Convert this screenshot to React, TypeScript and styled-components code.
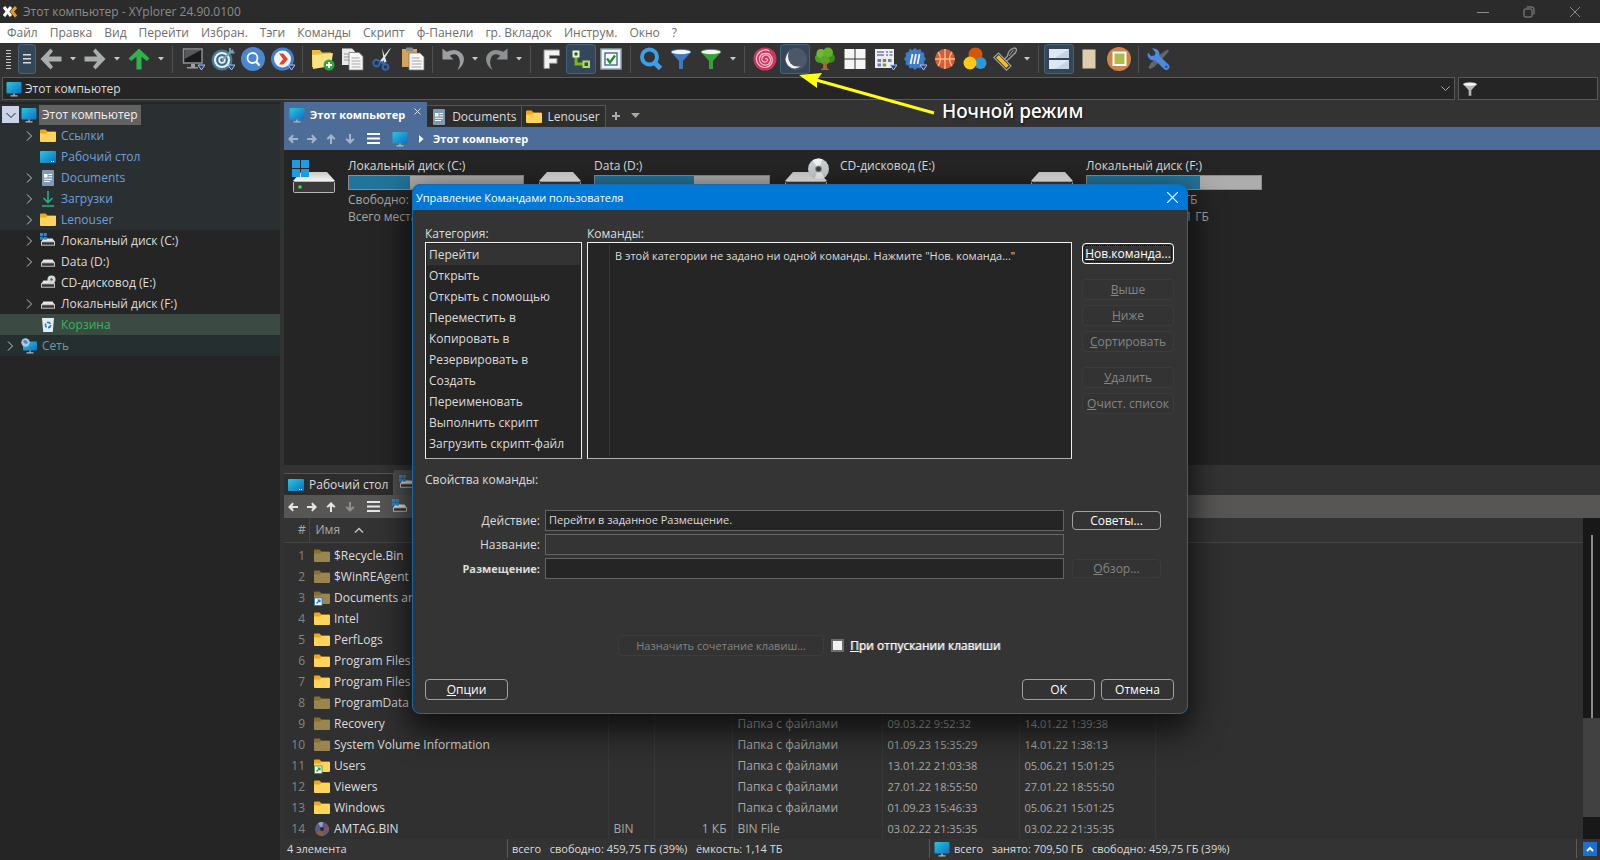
import React from "react";
import styled, { createGlobalStyle, css } from "styled-components";

const GlobalStyle = createGlobalStyle`
  * { box-sizing: border-box; }
  html, body, #root { height: 100%; margin: 0; }
  body {
    background: #333;
    color: #dcdcdc;
    font: 12px/16px "Open Sans", "Noto Sans", sans-serif;
    overflow: hidden;
  }
  button, input { font: inherit; color: inherit; }
  button { padding: 0; }
  ul { list-style: none; margin: 0; padding: 0; }
  svg { display: block; flex: none; }
`;

/* ---------- icons ---------- */

const MonitorIcon = ({ size = 16 }: { size?: number }) => (
  <svg width={size} height={size} viewBox="0 0 16 16">
    <defs>
      <linearGradient id="scr" x1="0" y1="0" x2="1" y2="1">
        <stop offset="0" stopColor="#27c6dc" />
        <stop offset="1" stopColor="#0f6fc4" />
      </linearGradient>
    </defs>
    <rect x="0.5" y="1" width="15" height="11.500" rx="1" fill="url(#scr)" />
    <path d="M7.300 12.500h1.400v2h-1.400zM4.500 14.200h7v1.200h-7z" fill="#a9bcc6" />
  </svg>
);

const DesktopIcon = () => (
  <svg width="16" height="16" viewBox="0 0 16 16">
    <rect x="0" y="2" width="16" height="12" rx="1" fill="url(#scr)" />
    <path d="M11 12h1v1h-1zM13 12h1v1h-1z" fill="#fff" />
  </svg>
);

const FolderIcon = ({ dim, badge }: { dim?: boolean; badge?: string }) => (
  <svg width="16" height="16" viewBox="0 0 16 16">
    <path d="M0 2.500q0-1 1-1h4.500l2 2H15q1 0 1 1V8H0z" fill={dim ? "#8a6f2a" : "#f0a818"} />
    <path d="M0 5.500h6l1.500-1.500H15q1 0 1 1V13q0 1-1 1H1q-1 0-1-1z" fill={dim ? "#9a8450" : "#ffd35c"} />
    {badge && (
      <g>
        <rect x="0.500" y="8" width="7.500" height="7.500" fill="#fff" stroke={badge} strokeWidth=".8" />
        <path d="M2.500 13.500l3-3M3.500 10h2.500v2.500" stroke={badge} strokeWidth="1.200" fill="none" />
      </g>
    )}
  </svg>
);

const DocIcon = () => (
  <svg width="16" height="16" viewBox="0 0 16 16">
    <rect x="2" y="0" width="12" height="16" rx="1" fill="#8299b5" />
    <path d="M4 4h3.500v3.500H4zM8.500 4H12v1H8.500zM8.500 6.200H12v1H8.500zM4 8.700h8v1H4zM4 11h6v1H4z" fill="#fff" />
  </svg>
);

const DownloadIcon = () => (
  <svg width="16" height="16" viewBox="0 0 16 16" fill="none" stroke="#1fb58a" strokeWidth="1.600">
    <path d="M8 0v11M3.500 7L8 11.500 12.500 7M2 15h12" />
  </svg>
);

const WinTiles = () => <path d="M0 0h3v3H0zM3.700 0h3v3h-3zM0 3.700h3v3H0zM3.700 3.700h3v3h-3z" fill="#1e8fe0" />;

const DriveIcon = ({ kind }: { kind?: "win" | "cd" }) => (
  <svg width="16" height="16" viewBox="0 0 16 16">
    <path d="M3.500 5.500h9L15 9H1z" fill="#e8e8e8" />
    <rect x="1.500" y="8.800" width="13" height="3.400" fill="#333" stroke="#c8c8c8" />
    {kind === "win" && <WinTiles />}
    {kind === "cd" && (
      <g>
        <circle cx="11.500" cy="4.500" r="4" fill="#d4d8da" />
        <circle cx="11.500" cy="4.500" r="1.200" fill="#555" />
      </g>
    )}
  </svg>
);

const BigDriveIcon = ({ kind }: { kind?: "win" | "cd" }) => (
  <svg width="46" height="38" viewBox="0 0 46 38">
    <defs>
      <linearGradient id="lid" x1="0" y1="0" x2="0" y2="1">
        <stop offset="0" stopColor="#c9c9c9" />
        <stop offset="1" stopColor="#f2f2f2" />
      </linearGradient>
    </defs>
    <path d="M10 14h26l8 9H2z" fill="url(#lid)" />
    <rect x="2.500" y="23.500" width="41" height="11" rx="1" fill="#3a3a3a" stroke="#b9b9b9" />
    <circle cx="9" cy="29" r="1.800" fill="#3be03b" />
    {kind === "win" && (
      <path d="M1 2h8v8H1zM10 2h8v8h-8zM1 11h8v8H1zM10 11h8v8h-8z" fill="#1d9be6" />
    )}
    {kind === "cd" && (
      <g>
        <circle cx="35.500" cy="11" r="10.500" fill="#ccd0d2" />
        <path d="M35.500 11L29.500 2.500A10.500 10.500 0 0 1 39.500 1.300zM35.500 11l6 8.500a10.500 10.500 0 0 1-10 1.300z" fill="#f1f3f4" />
        <circle cx="35.500" cy="11" r="3" fill="#3f4447" stroke="#8d9396" />
      </g>
    )}
  </svg>
);

const BinIcon = () => (
  <svg width="16" height="16" viewBox="0 0 16 16">
    <path d="M2 1h12l-1.200 14H3.200z" fill="#e6edf2" />
    <circle cx="8" cy="8" r="2.600" fill="none" stroke="#1f7fd0" strokeWidth="1.600" strokeDasharray="4 1.400" />
  </svg>
);

const NetworkIcon = () => (
  <svg width="16" height="16" viewBox="0 0 16 16">
    <rect x="2" y="3.500" width="14" height="9" rx="1" fill="url(#scr)" />
    <path d="M8.500 12.500h1.200v2H8.500zM5.500 14.200h7v1.200h-7z" fill="#a9bcc6" />
    <circle cx="4.500" cy="4.500" r="4.200" fill="#a7cbe6" />
    <path d="M2 3q2-2 4 0T5 6Q3 6 2 3z" fill="#5189b8" />
  </svg>
);

const DiscFileIcon = () => (
  <svg width="16" height="16" viewBox="0 0 16 16">
    <circle cx="8" cy="8" r="7" fill="#5c5a86" />
    <path d="M8 8L2 12a7 7 0 0 0 8 2.700zM8 8l6.500 2.500A7 7 0 0 0 15 6z" fill="#8a5a48" />
    <path d="M8 8L4 2.300A7 7 0 0 1 9 1z" fill="#98a0c8" />
    <circle cx="8" cy="8" r="2" fill="#2c2c2c" />
  </svg>
);

const Chevron = ({ open }: { open?: boolean }) => (
  <svg width="10" height="10" viewBox="0 0 10 10" fill="none" stroke={open ? "#222" : "#c4c4c4"}>
    <path d={open ? "M.5 3L5 7.500 9.500 3" : "M2 .5L6.500 5 2 9.500"} />
  </svg>
);

const Caret = () => (
  <svg width="6" height="4" viewBox="0 0 6 4">
    <path d="M0 0h6L3 3.500z" fill="#c8c8c8" />
  </svg>
);

const SmallArrow = ({ turn, color }: { turn: number; color: string }) => (
  <svg width="10" height="10" viewBox="0 0 10 10">
    <path transform={`rotate(${turn} 5 5)`} d="M0 5L4.500.5l1.300 1.300L4.300 4H10v2H4.300l1.500 2.200-1.300 1.300z" fill={color} />
  </svg>
);

const BurgerIcon = ({ color }: { color: string }) => (
  <svg width="13" height="11" viewBox="0 0 13 11">
    <path d="M0 0h13v2H0zM0 4.500h13v2H0zM0 9h13v2H0z" fill={color} />
  </svg>
);

const FunnelIcon = ({ color, size = 24 }: { color: string; size?: number }) => (
  <svg width={size} height={size} viewBox="0 0 24 24">
    <path d="M2 5l8 9v8h4v-8l8-9z" fill={color} />
    <ellipse cx="12" cy="5" rx="10" ry="2.600" fill="#f2f6f8" stroke={color} strokeWidth=".8" />
  </svg>
);

const Mark = () => <path d="M17 18h7l-3.500 5z" fill="#27407c" stroke="#a9c4f0" strokeWidth="1" />;

const tool = (body: React.ReactNode) => (
  <svg width="24" height="24" viewBox="0 0 24 24">{body}</svg>
);

const bigArrow = "M1.500 12L11.500 1.500l2.500 2.700L9.800 9.500H22.500v5H9.800l4.200 5.300-2.500 2.700z";

const tools: Record<string, React.ReactNode> = {
  back: tool(<path d={bigArrow} fill="#a9aeab" />),
  forward: tool(<path d={bigArrow} transform="rotate(180 12 12)" fill="#a9aeab" />),
  up: tool(<path d={bigArrow} transform="rotate(90 12 12)" fill="#31b14c" />),
  screen: tool(
    <>
      <rect x="2.500" y="2" width="18.500" height="14" fill="#1a1a1a" stroke="#8d9092" strokeWidth="1.500" />
      <path d="M3.500 3h16.500L3.500 12z" fill="#55595c" />
      <path d="M10 17h4v3h-4zM6 20h11v1.500H6z" fill="#9b9ea0" />
      <Mark />
    </>,
  ),
  target: tool(
    <>
      <circle cx="11" cy="13" r="10.500" fill="#457a96" />
      <circle cx="11" cy="13" r="7" fill="#3b6f8b" stroke="#e9eef0" strokeWidth="2.200" />
      <circle cx="11" cy="13" r="2.800" fill="none" stroke="#e9eef0" strokeWidth="1.800" />
      <path d="M11 13L22 3M19 1v4.500h4.500" stroke="#7aa0b2" strokeWidth="1.800" fill="none" />
      <Mark />
    </>,
  ),
  find: tool(
    <>
      <circle cx="12" cy="12" r="12" fill="#4a86d2" />
      <circle cx="11.500" cy="11" r="5" fill="none" stroke="#fff" strokeWidth="1.800" />
      <path d="M15 14.500l3.500 4" stroke="#fff" strokeWidth="2.400" />
    </>,
  ),
  next: tool(
    <>
      <circle cx="11.500" cy="12" r="10" fill="#f6f6f6" stroke="#3f7fcf" strokeWidth="3" />
      <path d="M8 6.500h4.200L17 12l-4.800 5.500H8L12 12z" fill="#e2432a" />
      <Mark />
    </>,
  ),
  newFolder: tool(
    <>
      <path d="M1 3h8l2 2.500h9V20H1z" fill="#e6bd3d" />
      <path d="M1 8l12-1 9-1-2 13L2 22z" fill="#fbe285" />
      <circle cx="18" cy="18" r="5.500" fill="#2fa83c" />
      <path d="M18 15v6M15 18h6" stroke="#fff" strokeWidth="1.800" />
    </>,
  ),
  copy: tool(
    <>
      <path d="M1 1.500h10l3 3V18H1z" fill="#e9e9e9" />
      <path d="M3 7h5M3 10h5M3 13h5" stroke="#999" />
      <path d="M8 5.500h10l4 4V23H8z" fill="#f7f7f7" stroke="#777" strokeWidth=".8" />
      <path d="M10.500 11h8M10.500 14h9M10.500 17h9M10.500 20h9" stroke="#a5a5a5" />
    </>,
  ),
  cut: tool(
    <>
      <path d="M20 1L10.500 16.500l-1.500-2.500L18.500 2zM11 1l4.500 13.500-2.500 1.500z" fill="#e3e7ea" />
      <path d="M10 14l5 2-1 2-5-2z" fill="#2d66b8" />
      <circle cx="5.500" cy="16" r="3.200" fill="none" stroke="#2d66b8" strokeWidth="2" />
      <circle cx="14.500" cy="20" r="2.800" fill="none" stroke="#2d66b8" strokeWidth="2" />
    </>,
  ),
  paste: tool(
    <>
      <rect x="1" y="2" width="15" height="18" fill="#d4a559" />
      <rect x="5" y="0.500" width="7" height="4" rx="1" fill="#8a8a8a" />
      <path d="M8 6h11l4 4v13H8z" fill="#f7f7f7" stroke="#777" strokeWidth=".8" />
      <path d="M10.500 11h8M10.500 14h10M10.500 17h10M10.500 20h10" stroke="#a5a5a5" />
    </>,
  ),
  undo: tool(<path d="M1.500 1.500v11h11L8.800 8.800Q15.500 5 18 11t-1.500 12Q24.500 17 22.500 9.500 18-.5 5.500 4.800z" fill="#9c9fa1" />),
  redo: tool(<path d="M22.500 1.500v11H11.500l3.700-3.700Q8.500 5 6 11t1.500 12Q-.5 17 1.500 9.500 6-.5 18.500 4.800z" fill="#8e9193" />),
  flag: tool(
    <path d="M5 3h15.500v5.500H10.500v3h7.500v4.800h-7.500V21.500H5z" fill="#f2f2f2" stroke="#8e8e8e" strokeWidth="1" />,
  ),
  branch: tool(
    <g fill="none" strokeWidth="2">
      <path d="M7 9v8h8" stroke="#7ab51d" strokeWidth="3" />
      <rect x="4.500" y="4.500" width="5" height="5" fill="#34495c" stroke="#e6f7bd" />
      <rect x="14.500" y="14.500" width="5.500" height="5.500" fill="#34495c" stroke="#b5dd58" />
    </g>,
  ),
  check: tool(
    <>
      <rect x="2" y="2" width="20" height="20" fill="#f2f5f8" stroke="#8fa4b8" strokeWidth="1.500" />
      <rect x="6" y="6" width="12" height="12" fill="#fff" stroke="#4b6a86" strokeWidth="1.400" />
      <path d="M8 11.500l3 4 5-7" fill="none" stroke="#18962d" strokeWidth="2.400" />
    </>,
  ),
  lens: tool(
    <>
      <circle cx="10.500" cy="10" r="7.500" fill="#333" stroke="#3aa0ea" strokeWidth="4" />
      <path d="M15.500 15.500l6 6" stroke="#3aa0ea" strokeWidth="5" />
    </>,
  ),
  funnelBlue: <FunnelIcon color="#3d78c2" />,
  funnelGreen: <FunnelIcon color="#35a235" />,
  spiral: tool(
    <>
      <circle cx="12" cy="12" r="11.500" fill="#d0355e" />
      <path
        d="M12 12a1.500 1.500 0 0 1 2.500 1.500A3 3 0 0 1 9 13a4 4 0 0 1 7-3.500 5 5 0 0 1-3 8.500 6 6 0 0 1-6.500-7A6.500 6.500 0 0 1 19 11a7.500 7.500 0 0 1-7 9.500A8.500 8.500 0 0 1 3.500 11a9 9 0 0 1 13-7"
        fill="none"
        stroke="#f5c6d3"
        strokeWidth="1.200"
      />
    </>,
  ),
  moon: tool(
    <>
      <circle cx="13" cy="12" r="11" fill="#4c5868" />
      <path d="M6 4.500Q-.5 12 5 18.500q6 5.500 13 .5-6.500 2-10.500-2.500Q3.500 11 6 4.500z" fill="#f4f6f8" />
    </>,
  ),
  tree: tool(
    <>
      <path d="M10.500 12h3l.5 9 2.500 2h-9l2.500-2z" fill="#a9682c" />
      <circle cx="7" cy="11" r="5" fill="#4f9e22" />
      <circle cx="17" cy="11" r="5" fill="#3f8c1b" />
      <circle cx="8" cy="6.500" r="4.500" fill="#6dbb32" />
      <circle cx="15" cy="5.500" r="5" fill="#62b02c" />
      <circle cx="12" cy="13" r="4.500" fill="#57a626" />
      <path d="M10.500 15l1.500 3 1.500-3" stroke="#a9682c" strokeWidth="1.500" fill="none" />
    </>,
  ),
  tiles: tool(<path d="M1.500 2h10v9.500h-10zM12.500 2h10v9.500h-10zM1.500 12.500h10V22h-10zM12.500 12.500h10V22h-10z" fill="#f5f5f5" />),
  calendar: tool(
    <>
      <rect x="2" y="2" width="19" height="19" fill="#eceef2" />
      <path d="M4 5h7M13 5h2M16.500 5h3M4 8h7M13 8h2M16.500 8h3" stroke="#777f95" strokeWidth="1.600" />
      <path d="M4.500 12h3.500v3H4.500zM15 12h3.500v3H15zM4.500 16.500h3.500v3H4.500z" fill="#6e7fae" />
      <path d="M9.700 12h3.500v3H9.700z" fill="#a9722f" />
      <path d="M9.700 16.500h3.500v3H9.700z" fill="#6fa332" />
      <Mark />
    </>,
  ),
  badge: tool(
    <>
      <path
        d="M12 1l2.500 2L17.500 2l1 3 3 1-.5 3 2 3-2 2.500.5 3-3 1-1 3-3-.8L12 23l-2.500-2.300-3 .8-1-3-3-1 .5-3L1 12l2-3-.5-3 3-1 1-3 3 1z"
        fill="#3d7ac8"
      />
      <path d="M9.500 7l-2 10M13 7l-2 10M16.500 7l-2 10" stroke="#f0f4fa" strokeWidth="1.800" />
      <Mark />
    </>,
  ),
  ball: tool(
    <>
      <circle cx="12" cy="12" r="10" fill="#d75a40" />
      <path
        d="M12 2v20M2 12h20M5 5q5 7 0 14M19 5q-5 7 0 14"
        stroke="#f2c078"
        strokeWidth="1.400"
        fill="none"
      />
    </>,
  ),
  colors: tool(
    <>
      <circle cx="12.500" cy="7.500" r="7" fill="#d4560c" />
      <circle cx="17.500" cy="16" r="6" fill="#2f96d8" />
      <circle cx="7" cy="16" r="6.500" fill="#ffc814" />
    </>,
  ),
  brush: tool(
    <>
      <path d="M.8 10.500L5.500 6l12.500 13-4.500 4.200z" fill="#2b2b2b" stroke="#a2a2a2" strokeWidth="1.200" />
      <path d="M3 10.700L5.800 8l10 10.500-2.600 2.600z" fill="#f4bf1c" />
      <path d="M11 12.500l3.500-3.500Q15 3 21 1q4 0 1.500 4.500L17 11l-4 3.500" fill="none" stroke="#a2a2a2" strokeWidth="1.300" />
      <path d="M20.500 3l-4.500 6" stroke="#a2a2a2" />
    </>,
  ),
  split: tool(
    <>
      <path d="M2 2h20v9H2zM2 13h20v9H2z" fill="#dfe8f2" />
      <path d="M22 2v9H8zM22 13v9H8z" fill="#c5d3e4" />
    </>,
  ),
  sheet: tool(<rect x="5.500" y="2.500" width="13" height="19" fill="#dccdae" />),
  frame: tool(
    <>
      <circle cx="12" cy="12" r="12" fill="#cd8447" />
      <rect x="6.500" y="5.500" width="12" height="12.500" fill="#b0bb4c" stroke="#fff" strokeWidth="2" />
    </>,
  ),
  wrench: tool(
    <>
      <path d="M20.500 2.500l1.500 1.500L17 10 7 20l-4 2-1.500-1.500 2-4L13 7.500z" fill="#62676e" />
      <path
        d="M5 1.500l3.500 4-1 3-3.500.5L1 5.500Q-.5 10 3 12.500q3 1.500 5 .8l9 8.700q2.500 2 4.500 0t0-4.500L12.500 9Q13 5 10.500 2.800 8 1 5 1.500z"
        fill="#4a8ae0"
      />
      <circle cx="19.300" cy="19.800" r="1.200" fill="#234a86" />
    </>,
  ),
};

/* ---------- window frame ---------- */

const Shell = styled.div`
  display: flex;
  flex-direction: column;
  height: 100vh;
  position: relative;
`;

const TitleBar = styled.header`
  display: flex;
  align-items: center;
  height: 23px;
  padding: 0 2px 0 3px;
  gap: 6px;
  background: #2b2b2b;
  color: #8c8c8c;
`;

const TitleText = styled.span`
  flex: 1;
  white-space: pre;
`;

const WindowControls = styled.div`
  display: flex;
`;

const WindowButton = styled.button`
  width: 46px;
  height: 20px;
  display: grid;
  place-items: center;
  border: 0;
  background: none;
`;

const MenuBar = styled.nav`
  display: flex;
  align-items: center;
  height: 20px;
  padding-left: 7px;
  gap: 12px;
  background: #fff;
`;

const MenuItem = styled.button`
  border: 0;
  background: none;
  color: #6d6d6d;
`;

const Toolbar = styled.div`
  position: relative;
  display: flex;
  align-items: center;
  height: 34px;
  padding: 0 0 2px 6px;
`;

const Grip = styled.span`
  width: 5px;
  height: 19px;
  margin-right: 7px;
  background: repeating-linear-gradient(#c8c8c8 0 1px, transparent 1px 3px);
`;

const ToolButton = styled.button<{ $on?: boolean; $w?: number }>`
  width: ${(p) => p.$w ?? 30}px;
  height: 30px;
  display: grid;
  place-items: center;
  border: 1px solid ${(p) => (p.$on ? "#47617a" : "transparent")};
  border-radius: 3px;
  background: ${(p) => (p.$on ? "#34465a" : "none")};
`;

const ToolSeparator = styled.span`
  width: 1px;
  height: 27px;
  margin: 0 5px 0 4px;
  background: #505050;
`;

const Callout = styled.div`
  position: absolute;
  left: 799px;
  top: 30px;
  z-index: 2;
  display: flex;
  color: #fff;
  font: 500 19px/26px "Noto Sans", sans-serif;
  pointer-events: none;
`;

const CalloutText = styled.span`
  padding: 25px 0 0 7px;
  text-shadow: 1px 1px 2px #111;
`;

const AddressRow = styled.div`
  display: flex;
  gap: 3px;
  height: 23px;
  padding: 0 2px;
`;

const FieldBox = styled.label<{ $w?: number }>`
  display: flex;
  align-items: center;
  gap: 3px;
  min-width: 0;
  padding: 0 4px 0 3px;
  ${(p) => (p.$w ? css`width: ${p.$w}px;` : css`flex: 1;`)}
  background: #252525;
  border: 1px solid #5a5a5a;
`;

const BareInput = styled.input`
  flex: 1;
  min-width: 0;
  padding: 0;
  border: 0;
  outline: 0;
  background: none;
`;

const Workspace = styled.main`
  flex: 1;
  display: flex;
  min-height: 0;
  padding-top: 2px;
`;

/* ---------- folder tree ---------- */

const TreePane = styled.aside`
  width: 280px;
  margin-right: 4px;
  background: #252525;
  padding-top: 2px;
`;

const toneFill = { base: "#252525", blue: "#2a2f32", green: "#3b4a43", teal: "#262f30" };
const toneText = { base: "#dcdcdc", blue: "#6f9fdc", green: "#35b85c", teal: "#709c96" };
type Tone = keyof typeof toneFill;

const TreeRow = styled.li<{ $depth: number; $tone: Tone }>`
  display: flex;
  align-items: center;
  height: 21px;
  padding-left: ${(p) => 2 + p.$depth * 19}px;
  background: ${(p) => toneFill[p.$tone]};
  color: ${(p) => toneText[p.$tone]};
`;

const Expander = styled.button<{ $open?: boolean }>`
  width: 17px;
  height: 17px;
  margin-right: 2px;
  display: grid;
  place-items: center;
  border: 0;
  background: ${(p) => (p.$open ? "#c9d3ea" : "none")};
`;

const TreeLabel = styled.span<{ $selected?: boolean }>`
  margin-left: 2px;
  padding: 2px 3px;
  ${(p) => p.$selected && css`background: #626262; color: #f0f0f0;`}
`;

const tree: { text: string; depth: number; tone: Tone; icon: React.ReactNode; expand?: boolean; open?: boolean }[] = [
  { text: "Этот компьютер", depth: 0, tone: "blue", icon: <MonitorIcon />, expand: true, open: true },
  { text: "Ссылки", depth: 1, tone: "blue", icon: <FolderIcon />, expand: true },
  { text: "Рабочий стол", depth: 1, tone: "blue", icon: <DesktopIcon /> },
  { text: "Documents", depth: 1, tone: "blue", icon: <DocIcon />, expand: true },
  { text: "Загрузки", depth: 1, tone: "blue", icon: <DownloadIcon />, expand: true },
  { text: "Lenouser", depth: 1, tone: "blue", icon: <FolderIcon />, expand: true },
  { text: "Локальный диск (C:)", depth: 1, tone: "base", icon: <DriveIcon kind="win" />, expand: true },
  { text: "Data (D:)", depth: 1, tone: "base", icon: <DriveIcon />, expand: true },
  { text: "CD-дисковод (E:)", depth: 1, tone: "base", icon: <DriveIcon kind="cd" /> },
  { text: "Локальный диск (F:)", depth: 1, tone: "base", icon: <DriveIcon />, expand: true },
  { text: "Корзина", depth: 1, tone: "green", icon: <BinIcon /> },
  { text: "Сеть", depth: 0, tone: "teal", icon: <NetworkIcon />, expand: true },
];

/* ---------- file panes ---------- */

const Panes = styled.section`
  flex: 1;
  min-width: 0;
  display: flex;
  flex-direction: column;
`;

const TabStrip = styled.div`
  display: flex;
  align-items: flex-end;
  height: 25px;
`;

const Tab = styled.button<{ $active?: string }>`
  position: relative;
  display: flex;
  align-items: center;
  gap: 5px;
  height: ${(p) => (p.$active ? 25 : 22)}px;
  padding: 0 5px 0 4px;
  border: 1px solid #555;
  border-width: 1px 1px 0 0;
  background: #2d2d2d;
  white-space: nowrap;
  ${(p) =>
    p.$active &&
    css`
      padding: 0 21px 0 5px;
      border-color: ${p.$active};
      background: ${p.$active};
      color: #fff;
      font-size: 11px;
      font-weight: 700;
    `}
`;

const TabClose = styled.span`
  position: absolute;
  right: 5px;
  top: 5px;
`;

const TabTool = styled.button`
  width: 20px;
  height: 22px;
  display: grid;
  place-items: center;
  border: 0;
  background: none;
`;

const PathBar = styled.div<{ $fill: string }>`
  display: flex;
  align-items: center;
  height: 23px;
  padding-left: 4px;
  gap: 9px;
  background: ${(p) => p.$fill};
  color: #fff;
  font-size: 11px;
  font-weight: 700;
`;

const ArrowButton = styled.button`
  width: 10px;
  height: 20px;
  display: grid;
  place-items: center;
  border: 0;
  background: none;
`;

const PathMenu = styled(ArrowButton)`
  width: 19px;
`;

const DriveArea = styled.div`
  flex: 1;
  min-height: 0;
  display: flex;
  align-items: flex-start;
  padding: 8px 0 0 7px;
  background: #252525;
`;

const DriveCard = styled.div`
  display: flex;
  width: 246px;
  gap: 11px;
  color: #a8a8a8;
  white-space: nowrap;
`;

const DriveName = styled.div`
  margin-bottom: 1px;
  color: #dcdcdc;
`;

const Gauge = styled.div`
  width: 176px;
  height: 15px;
  margin-bottom: 1px;
  border: 1px solid #8c8c8c;
  background: #adadad;
`;

const GaugeFill = styled.div`
  height: 100%;
  background: #23749a;
`;

const DriveNote = styled.div`
  line-height: 17px;
`;

const drives: { name: string; used?: number; free?: string; total?: string; kind?: "win" | "cd" }[] = [
  { name: "Локальный диск (C:)", used: 35, free: "Свободно: 96", total: "Всего места:", kind: "win" },
  { name: "Data (D:)", used: 57 },
  { name: "CD-дисковод (E:)", kind: "cd" },
  { name: "Локальный диск (F:)", used: 65, free: "Свободно: 163,3 ГБ", total: "Всего места: 461,1 ГБ" },
];

const LowerPane = styled.div`
  display: flex;
  flex-direction: column;
  padding-top: 5px;
`;

const ListArea = styled.div`
  display: flex;
`;

const FileTable = styled.table`
  flex: 1;
  width: 100%;
  table-layout: fixed;
  border-collapse: collapse;
  background: #303030;
  color: #a8a8a8;

  th {
    height: 24px;
    padding: 0 0 0 6px;
    border-bottom: 1px solid #454545;
    background: #333;
    font-weight: 400;
    text-align: left;
  }
  th:first-child { padding-left: 14px; border-right: 1px solid #454545; }
  td {
    height: 21px;
    padding: 0 0 0 5px;
    border-right: 1px solid #393939;
    white-space: nowrap;
  }
  td:first-child, td:last-child { border-right: 0; }
`;

const SpacerRow = styled.tr`
  && td { height: 3px; }
`;

const NumCell = styled.td`
  && { padding: 0 4px 0 0; }
  text-align: right;
  color: #858585;
`;

const SizeCell = styled.td`
  && { padding: 0 5px 0 0; }
  text-align: right;
`;

const DateCell = styled.td`
  font-size: 11px;
`;

const NameBox = styled.span`
  display: flex;
  align-items: center;
  gap: 4px;
  color: #dcdcdc;
`;

const SortHead = styled.span`
  display: flex;
  align-items: center;
  gap: 14px;
`;

const ScrollTrack = styled.div`
  width: 17px;
  display: flex;
  flex-direction: column;
  background: #181818;
`;

const ScrollLine = styled.div`
  width: 2px;
  height: 183px;
  margin: 17px 0 0 8px;
  background: #8a8a8a;
`;

const ScrollThumb = styled.div`
  height: 99px;
  background: #414141;
`;

type FileRow = { name: string; icon: React.ReactNode; ext?: string; size?: string; type?: string; changed?: string; made?: string };
const dir = "Папка с файлами";
const files: FileRow[] = [
  { name: "$Recycle.Bin", icon: <FolderIcon dim /> },
  { name: "$WinREAgent", icon: <FolderIcon dim /> },
  { name: "Documents and", icon: <FolderIcon dim badge="#1673d0" /> },
  { name: "Intel", icon: <FolderIcon /> },
  { name: "PerfLogs", icon: <FolderIcon /> },
  { name: "Program Files", icon: <FolderIcon /> },
  { name: "Program Files (", icon: <FolderIcon /> },
  { name: "ProgramData", icon: <FolderIcon dim /> },
  { name: "Recovery", icon: <FolderIcon dim />, type: dir, changed: "09.03.22 9:52:32", made: "14.01.22 1:39:38" },
  { name: "System Volume Information", icon: <FolderIcon dim />, type: dir, changed: "01.09.23 15:35:29", made: "14.01.22 1:38:13" },
  { name: "Users", icon: <FolderIcon badge="#1f9a3a" />, type: dir, changed: "13.01.22 21:03:38", made: "05.06.21 15:01:25" },
  { name: "Viewers", icon: <FolderIcon />, type: dir, changed: "27.01.22 18:55:50", made: "27.01.22 18:55:50" },
  { name: "Windows", icon: <FolderIcon />, type: dir, changed: "01.09.23 15:46:33", made: "05.06.21 15:01:25" },
  { name: "AMTAG.BIN", icon: <DiscFileIcon />, ext: "BIN", size: "1 КБ", type: "BIN File", changed: "03.02.22 21:35:35", made: "03.02.22 21:35:35" },
];

const StatusBar = styled.footer`
  display: flex;
  align-items: center;
  height: 21px;
  padding: 0 3px 2px;
  gap: 4px;
  font-size: 11px;
  white-space: pre;
`;

const StatusCell = styled.span<{ $w?: number }>`
  display: flex;
  align-items: center;
  gap: 4px;
  height: 19px;
  border-right: 1px solid #5a5a5a;
  ${(p) => (p.$w ? css`width: ${p.$w}px;` : css`flex: 1;`)}
`;

const StatusButton = styled.button`
  width: 14px;
  height: 14px;
  margin-left: 2px;
  display: grid;
  place-items: center;
  border: 0;
  background: #1a6fd0;
`;

/* ---------- dialog ---------- */

const Overlay = styled.div`
  position: absolute;
  inset: 184px 0 auto;
  z-index: 3;
  display: flex;
  justify-content: center;
`;

const Dialog = styled.section`
  width: 776px;
  border: 1px solid #1a6aab;
  border-radius: 8px;
  background: #343434;
  box-shadow: 0 12px 32px 4px rgba(0, 0, 0, 0.7);
  overflow: hidden;
`;

const DialogTitle = styled.header`
  display: flex;
  align-items: center;
  justify-content: space-between;
  height: 25px;
  padding: 0 9px 0 3px;
  background: #0078d7;
  color: #fff;
  font-size: 11px;
`;

const CloseButton = styled.button`
  border: 0;
  background: none;
`;

const DialogBody = styled.form`
  display: flex;
  flex-direction: column;
  padding: 16px 13px 13px 12px;
`;

const Choices = styled.div`
  display: grid;
  grid-template-columns: 157px 1fr 92px;
  column-gap: 5px;
`;

const Column = styled.div`
  display: flex;
  flex-direction: column;
`;

const ListBox = styled.ul`
  height: 217px;
  padding: 1px;
  border: 1px solid #f0f0f0;
  border-bottom-color: #b0b0b0;
  background: #252525;
`;

const Option = styled.li<{ $selected?: boolean }>`
  height: 21px;
  padding-left: 2px;
  line-height: 21px;
  background: ${(p) => (p.$selected ? "#333" : "none")};
`;

const CommandBox = styled(ListBox)`
  margin-right: 5px;
  padding: 2px 2px 2px 0;
`;

const CommandNote = styled.li`
  height: 100%;
  margin-left: 21px;
  padding: 3px 0 0 5px;
  border-left: 1px solid #383838;
  font-size: 11px;
`;

const ButtonStack = styled.div`
  display: flex;
  flex-direction: column;
  gap: 15px;
  padding-top: 17px;
`;

const ButtonGroup = styled.div`
  display: flex;
  flex-direction: column;
  gap: 5px;
`;

const PushButton = styled.button<{ $w?: number; $short?: boolean; $focus?: boolean; $small?: boolean }>`
  width: ${(p) => (p.$w ? `${p.$w}px` : "100%")};
  height: ${(p) => (p.$short ? 19 : 21)}px;
  border: 1px solid ${(p) => (p.$focus ? "#fff" : "#a0a0a0")};
  border-radius: 4px;
  background: #333;
  color: #fff;
  font-size: ${(p) => (p.$small ? 11 : 12)}px;
  line-height: 17px;
  white-space: nowrap;
  ${(p) => p.$focus && css`outline: 1px dotted #000; outline-offset: -3px;`}
  &:disabled {
    border-color: #3c3c3c;
    color: #858585;
  }
`;

const SectionLabel = styled.div`
  margin: 13px 0 22px;
`;

const FieldGrid = styled.div`
  display: grid;
  grid-template-columns: 115px 1fr 89px;
  column-gap: 5px;
  row-gap: 3px;
  align-items: center;
  padding-right: 13px;
`;

const FieldLabel = styled.label<{ $strong?: boolean }>`
  text-align: right;
  ${(p) => p.$strong && css`font-size: 11px; font-weight: 700;`}
`;

const TextField = styled.input`
  height: 21px;
  margin-right: 3px;
  padding: 0 3px 2px;
  border: 1px solid #646464;
  background: #252525;
  font-size: 11px;
  &:disabled { background: #343434; }
`;

const KeyRow = styled.div`
  display: flex;
  align-items: center;
  margin-top: 56px;
  padding-left: 193px;
`;

const CheckLabel = styled.label`
  display: flex;
  align-items: center;
  gap: 6px;
  margin-left: 7px;
  color: #fff;
  font-size: 12px;
  text-shadow: 1px 0 0 rgba(255, 255, 255, 0.5);
`;

const CheckBox = styled.input`
  appearance: none;
  width: 13px;
  height: 13px;
  margin: 0;
  border: 2px solid #6e6e6e;
  background: #f2f2f2;
`;

const DialogFooter = styled.div`
  display: flex;
  gap: 6px;
  margin-top: 23px;
`;

const FooterGap = styled.span`
  flex: 1;
`;

const Key = ({ text }: { text: string }) => (
  <>
    <u>{text[0]}</u>
    {text.slice(1)}
  </>
);

const categories = [
  "Перейти",
  "Открыть",
  "Открыть с помощью",
  "Переместить в",
  "Копировать в",
  "Резервировать в",
  "Создать",
  "Переименовать",
  "Выполнить скрипт",
  "Загрузить скрипт-файл",
];

const CommandDialog = () => (
  <Overlay>
    <Dialog role="dialog" aria-labelledby="dlg-title">
      <DialogTitle>
        <span id="dlg-title">Управление Командами пользователя</span>
        <CloseButton aria-label="Закрыть">
          <svg width="11" height="11" viewBox="0 0 11 11" stroke="#fff" strokeWidth="1.200">
            <path d="M0 0l11 11M11 0L0 11" />
          </svg>
        </CloseButton>
      </DialogTitle>
      <DialogBody onSubmit={(e) => e.preventDefault()}>
        <Choices>
          <Column>
            <span id="cat">Категория:</span>
            <ListBox role="listbox" aria-labelledby="cat">
              {categories.map((c, i) => (
                <Option key={c} role="option" aria-selected={i === 0} $selected={i === 0}>
                  {c}
                </Option>
              ))}
            </ListBox>
          </Column>
          <Column>
            <span id="cmd">Команды:</span>
            <CommandBox aria-labelledby="cmd">
              <CommandNote>В этой категории не задано ни одной команды. Нажмите "Нов. команда..."</CommandNote>
            </CommandBox>
          </Column>
          <ButtonStack>
            <PushButton type="button" $focus><Key text="Нов.команда..." /></PushButton>
            <ButtonGroup>
              {["Выше", "Ниже", "Сортировать"].map((t) => (
                <PushButton key={t} type="button" disabled><Key text={t} /></PushButton>
              ))}
            </ButtonGroup>
            <ButtonGroup>
              {["Удалить", "Очист. список"].map((t) => (
                <PushButton key={t} type="button" disabled><Key text={t} /></PushButton>
              ))}
            </ButtonGroup>
          </ButtonStack>
        </Choices>
        <SectionLabel>Свойства команды:</SectionLabel>
        <FieldGrid>
          <FieldLabel htmlFor="action">Действие:</FieldLabel>
          <TextField id="action" readOnly value="Перейти в заданное Размещение." />
          <PushButton type="button" $short>Советы...</PushButton>
          <FieldLabel htmlFor="caption">Название:</FieldLabel>
          <TextField id="caption" disabled />
          <span />
          <FieldLabel htmlFor="place" $strong>Размещение:</FieldLabel>
          <TextField id="place" />
          <PushButton type="button" $short disabled><Key text="Обзор..." /></PushButton>
        </FieldGrid>
        <KeyRow>
          <PushButton type="button" $w={206} $small disabled>Назначить сочетание клавиш...</PushButton>
          <CheckLabel>
            <CheckBox type="checkbox" />
            <span><Key text="При отпускании клавиши" /></span>
          </CheckLabel>
        </KeyRow>
        <DialogFooter>
          <PushButton type="button" $w={83}><Key text="Опции" /></PushButton>
          <FooterGap />
          <PushButton type="submit" $w={73}>OK</PushButton>
          <PushButton type="button" $w={73}>Отмена</PushButton>
        </DialogFooter>
      </DialogBody>
    </Dialog>
  </Overlay>
);

/* ---------- page ---------- */

const toolOrder = [
  "back", "v", "forward", "v", "up", "v", "|",
  "screen", "target", "find", "next", "|",
  "newFolder", "copy", "cut", "paste", "|",
  "undo", "v", "redo", "v", "|",
  "flag", "branch", "check", "|",
  "lens", "funnelBlue", "funnelGreen", "v", "|",
  "spiral", "moon", "tree", "tiles", "calendar", "badge", "ball", "colors", "brush", "v", "|",
  "split", "sheet", "frame", "|",
  "wrench",
];
const pressed = ["branch", "moon", "split"];

const menu = ["Файл", "Правка", "Вид", "Перейти", "Избран.", "Тэги", "Команды", "Скрипт", "ф-Панели", "гр. Вкладок", "Инструм.", "Окно", "?"];

const windowGlyphs = [
  { label: "Свернуть", d: "M1 7.500h12" },
  { label: "Восстановить", d: "M2 5q0-1 1-1h6q1 0 1 1v6q0 1-1 1H3q-1 0-1-1zM4.500 2H10q2 0 2 2v5.500" },
  { label: "Закрыть", d: "M2 2l10 10M12 2L2 12" },
];

const NavArrows = ({ colors, burger }: { colors: string[]; burger: string }) => (
  <>
    {[0, 180, 90, 270].map((turn, i) => (
      <ArrowButton key={turn} aria-label={["Назад", "Вперёд", "Вверх", "Вниз"][i]}>
        <SmallArrow turn={turn} color={colors[i]} />
      </ArrowButton>
    ))}
    <PathMenu aria-label="Меню"><BurgerIcon color={burger} /></PathMenu>
  </>
);

const App = () => (
  <Shell>
    <GlobalStyle />
    <TitleBar>
      <svg width="14" height="12" viewBox="0 0 14 12" fill="none" strokeWidth="3">
        <path d="M1 1l7 9M8 1L1 10" stroke="#fff" />
        <path d="M13 1l-4 4.500 4 5" stroke="#e89a1c" />
      </svg>
      <TitleText>Этот компьютер - XYplorer 24.90.0100</TitleText>
      <WindowControls>
        {windowGlyphs.map((g) => (
          <WindowButton key={g.label} aria-label={g.label}>
            <svg width="14" height="14" viewBox="0 0 14 14" fill="none" stroke="#8c8c8c"><path d={g.d} /></svg>
          </WindowButton>
        ))}
      </WindowControls>
    </TitleBar>
    <MenuBar>
      {menu.map((m) => <MenuItem key={m}>{m}</MenuItem>)}
    </MenuBar>
    <Toolbar>
      <Grip />
      <ToolButton $w={18} $on aria-label="Панель">
        <svg width="8" height="12" viewBox="0 0 8 12"><path d="M0 1h8v1.500H0zM0 5h8v1.500H0zM0 9h8v1.500H0z" fill="#dcdcdc" /></svg>
      </ToolButton>
      {toolOrder.map((t, i) =>
        t === "|" ? (
          <ToolSeparator key={i} />
        ) : t === "v" ? (
          <ToolButton key={i} $w={14} aria-label="Ещё"><Caret /></ToolButton>
        ) : (
          <ToolButton key={i} $on={pressed.includes(t)} aria-label={t}>{tools[t]}</ToolButton>
        ),
      )}
      <Callout>
        <svg width="136" height="44" viewBox="0 0 136 44">
          <path d="M10 5l125 35" stroke="#ffff10" strokeWidth="3" />
          <path d="M0 2l23-2-5 7 0 8z" fill="#ffff10" />
        </svg>
        <CalloutText>Ночной режим</CalloutText>
      </Callout>
    </Toolbar>
    <AddressRow>
      <FieldBox>
        <MonitorIcon />
        <BareInput aria-label="Адрес" defaultValue="Этот компьютер" />
        <svg width="9" height="6" viewBox="0 0 9 6" fill="none" stroke="#b0b0b0"><path d="M.5.5l4 4 4-4" /></svg>
      </FieldBox>
      <FieldBox $w={140}>
        <FunnelIcon color="#b4b4b4" size={16} />
        <BareInput aria-label="Фильтр" />
      </FieldBox>
    </AddressRow>
    <Workspace>
      <TreePane>
        <ul>
          {tree.map((t) => (
            <TreeRow key={t.text} $depth={t.depth} $tone={t.tone}>
              <Expander $open={t.open} disabled={!t.expand} aria-label={t.text}>
                {t.expand && <Chevron open={t.open} />}
              </Expander>
              {t.icon}
              <TreeLabel $selected={t.open}>{t.text}</TreeLabel>
            </TreeRow>
          ))}
        </ul>
      </TreePane>
      <Panes>
        <TabStrip>
          <Tab $active="#4d6d98">
            <MonitorIcon />
            Этот компьютер
            <TabClose>
              <svg width="7" height="7" viewBox="0 0 7 7" stroke="#d6dfec"><path d="M.5.5l6 6M6.500.5l-6 6" /></svg>
            </TabClose>
          </Tab>
          <Tab><DocIcon />Documents</Tab>
          <Tab><FolderIcon />Lenouser</Tab>
          <TabTool aria-label="Новая вкладка">
            <svg width="8" height="8" viewBox="0 0 8 8"><path d="M3 0h2v3h3v2H5v3H3V5H0V3h3z" fill="#a8a8a8" /></svg>
          </TabTool>
          <TabTool aria-label="Вкладки">
            <svg width="9" height="6" viewBox="0 0 9 6"><path d="M0 0h9L4.500 5z" fill="#a8a8a8" /></svg>
          </TabTool>
        </TabStrip>
        <PathBar $fill="#4d6d98">
          <NavArrows colors={["#a3b3cb", "#a3b3cb", "#a3b3cb", "#a3b3cb"]} burger="#fff" />
          <MonitorIcon />
          <svg width="7" height="8" viewBox="0 0 7 8"><path d="M2 0l4.500 4L2 8z" fill="#fff" /></svg>
          <span>Этот компьютер</span>
        </PathBar>
        <DriveArea>
          {drives.map((d) => (
            <DriveCard key={d.name}>
              <BigDriveIcon kind={d.kind} />
              <div>
                <DriveName>{d.name}</DriveName>
                {d.used && (
                  <>
                    <Gauge><GaugeFill style={{ width: `${d.used}%` }} /></Gauge>
                    <DriveNote>{d.free}</DriveNote>
                    <DriveNote>{d.total}</DriveNote>
                  </>
                )}
              </div>
            </DriveCard>
          ))}
        </DriveArea>
        <LowerPane>
          <TabStrip>
            <Tab><DesktopIcon />Рабочий стол</Tab>
            <Tab $active="#4f4f4f" aria-label="Диск"><DriveIcon kind="win" /></Tab>
          </TabStrip>
          <PathBar $fill="#575655">
            <NavArrows colors={["#e6e6e6", "#e6e6e6", "#e6e6e6", "#8f8f8f"]} burger="#e6e6e6" />
            <DriveIcon kind="win" />
          </PathBar>
          <ListArea>
            <FileTable>
              <colgroup>
                {[25, 299, 46, 78, 150, 137, 136].map((w, i) => <col key={i} width={w} />)}
                <col />
              </colgroup>
              <thead>
                <tr>
                  <th>#</th>
                  <th>
                    <SortHead>
                      Имя
                      <svg width="10" height="6" viewBox="0 0 10 6" fill="none" stroke="#c0c0c0" strokeWidth="1.500"><path d="M1 5.500l4-4 4 4" /></svg>
                    </SortHead>
                  </th>
                  <th colSpan={6} />
                </tr>
              </thead>
              <tbody>
                <SpacerRow><td /><td /><td /><td /><td /><td /><td /><td /></SpacerRow>
                {files.map((f, i) => (
                  <tr key={f.name}>
                    <NumCell>{i + 1}</NumCell>
                    <td><NameBox>{f.icon}{f.name}</NameBox></td>
                    <td>{f.ext}</td>
                    <SizeCell>{f.size}</SizeCell>
                    <td>{f.type}</td>
                    <DateCell>{f.changed}</DateCell>
                    <DateCell>{f.made}</DateCell>
                    <td />
                  </tr>
                ))}
              </tbody>
            </FileTable>
            <ScrollTrack>
              <ScrollLine />
              <ScrollThumb />
            </ScrollTrack>
          </ListArea>
        </LowerPane>
        <StatusBar>
          <StatusCell $w={221}>4 элемента</StatusCell>
          <StatusCell $w={418}>всего   свободно: 459,75 ГБ (39%)   ёмкость: 1,14 ТБ</StatusCell>
          <StatusCell>
            <MonitorIcon />
            всего   занято: 709,50 ГБ   свободно: 459,75 ГБ (39%)
          </StatusCell>
          <StatusButton aria-label="Развернуть">
            <svg width="8" height="6" viewBox="0 0 8 6" fill="none" stroke="#fff" strokeWidth="2"><path d="M1 5l3-3 3 3" /></svg>
          </StatusButton>
        </StatusBar>
      </Panes>
    </Workspace>
    <CommandDialog />
  </Shell>
);

export default App;
